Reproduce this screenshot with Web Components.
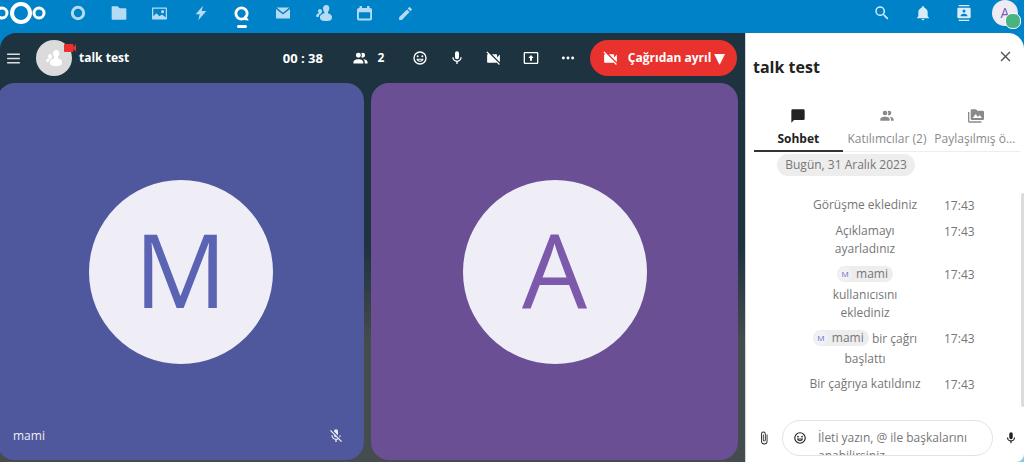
<!DOCTYPE html>
<html lang="tr">
<head>
<meta charset="utf-8">
<meta name="viewport" content="width=device-width, initial-scale=1">
<title>talk test</title>
<style>
  html, body { margin: 0; height: 100%; }
  body { font-family: "Open Sans", "Noto Sans", sans-serif; font-size: 12px; line-height: 18px; color: #222; overflow: hidden; }
</style>
</head>
<body>
<talk-app></talk-app>

<script>
const ICONS = {
  ring: '<circle cx="12" cy="12" r="8.5" fill="none" stroke="currentColor" stroke-width="4.5"/>',
  files: '<path d="M2 2h8l3 3h9a1 1 0 0 1 1 1v15a1 1 0 0 1-1 1H2a1 1 0 0 1-1-1V3a1 1 0 0 1 1-1z"/>',
  photos: '<path fill-rule="evenodd" d="M1 2.500h22q1 0 1 1v17q0 1-1 1H1q-1 0-1-1v-17q0-1 1-1zM2 4.500v12l5-5 5 5 4-3 6 5v-14zM17 6.500a2.500 2.500 0 1 1 0 5 2.500 2.500 0 0 1 0-5z"/>',
  bolt: '<path d="M15 1 4 14h6L8 23l12-14h-7z"/>',
  talk: '<circle cx="12" cy="12" r="9" fill="none" stroke="currentColor" stroke-width="4.500"/><path d="M17 15l6 6v2q-5 0-8-2z"/>',
  mail: '<path d="M0 5l12 9.500L24 5v15q0 1.500-1.500 1.500h-21Q0 21.500 0 20z"/><path d="M1 2.500h22L12 11.500z"/>',
  people: '<path d="M15.500 0c3 0 4.500 2.200 4.500 5 0 2.400-1 4-2 5.500v2c2 1 6 2 6 5.500 0 4-1.500 6-9 6s-9-2-9-6c0-3.500 4-4.500 6.500-5.500v-2C11 9 10.500 7.400 10.500 5c0-2.800 2-5 5-5z"/><path d="M6 6c2 0 3 1.500 3 3.300 0 1.500-.5 2.500-1.200 3.500-2 1-3.600 2.500-3.800 5.200H1c-1.500-1-1-4.500 3.200-5.500v-1C3.500 11 3 10.500 3 9.300 3 7.500 4 6 6 6z"/>',
  calendar: '<path fill-rule="evenodd" d="M5 0h2q1 0 1 1v2h8V1q0-1 1-1h2q1 0 1 1v2h1q3 0 3 3v14q0 3-3 3H3q-3 0-3-3V6q0-3 3-3h1V1q0-1 1-1zM3 10v9q0 1 1 1h16q1 0 1-1v-9z"/>',
  pencil: '<path d="M20.700 7a1 1 0 0 0 0-1.400L18.400 3.300a1 1 0 0 0-1.400 0l-1.900 1.800 3.800 3.800M3 17.200V21h3.800L17.800 9.900l-3.700-3.700z"/>',
  search: '<path d="M9.500 3A6.500 6.500 0 0 1 16 9.500c0 1.600-.6 3.100-1.600 4.200l.3.300h.8l5 5-1.500 1.500-5-5v-.8l-.3-.3A6.500 6.500 0 1 1 9.500 3m0 2a4.500 4.500 0 1 0 0 9 4.500 4.500 0 0 0 0-9z"/>',
  bell: '<path d="M21,19V20H3V19L5,17V11C5,7.900 7.030,5.170 10,4.290V4A2,2 0 0,1 14,4V4.290C16.970,5.170 19,7.900 19,11V17L21,19M14,21A2,2 0 0,1 10,21"/>',
  contacts: '<path d="M20,0H4V2H20V0M4,24H20V22H4V24M20,4H4A2,2 0 0,0 2,6V18A2,2 0 0,0 4,20H20A2,2 0 0,0 22,18V6A2,2 0 0,0 20,4M12,6.750A2.250,2.250 0 0,1 14.250,9A2.250,2.250 0 0,1 12,11.250A2.250,2.250 0 0,1 9.750,9A2.250,2.250 0 0,1 12,6.750M17,17H7V15.500C7,13.830 10.330,13 12,13C13.670,13 17,13.830 17,15.500V17Z"/>',
  menu: '<path d="M3 5h18v2H3zM3 11h18v2H3zM3 17h18v2H3z"/>',
  users: '<path d="M16 17V19H2V17S2 13 9 13 16 17 16 17M12.500 7.500A3.500 3.500 0 1 0 9 11A3.500 3.500 0 0 0 12.500 7.500M15.940 13A5.320 5.320 0 0 1 18 17V19H22V17S22 13.370 15.940 13M15 4A3.390 3.390 0 0 0 13.070 4.590A5 5 0 0 1 13.070 10.410A3.390 3.390 0 0 0 15 11A3.500 3.500 0 0 0 15 4Z"/>',
  smile: '<circle cx="12" cy="12" r="9" fill="none" stroke="currentColor" stroke-width="2"/><circle cx="8.500" cy="9.500" r="1.500"/><circle cx="15.500" cy="9.500" r="1.500"/><path fill-rule="evenodd" d="M6.600 13h10.800a5.500 5.500 0 0 1-10.800 0zM9 14.700q3 2.600 6 0z"/>',
  mic: '<path d="M12,2A3,3 0 0,1 15,5V11A3,3 0 0,1 9,11V5A3,3 0 0,1 12,2M19,11C19,14.530 16.390,17.440 13,17.930V21H11V17.930C7.610,17.440 5,14.530 5,11H7A5,5 0 0,0 17,11H19Z"/>',
  micOff: '<path d="M19,11C19,12.190 18.660,13.300 18.100,14.280L16.870,13.050C17.140,12.430 17.300,11.740 17.300,11H19M15,11.160L9,5.180V5A3,3 0 0,1 15,5V11.160M4.270,3L21,19.730L19.730,21L15.540,16.810C14.770,17.270 13.910,17.580 13,17.720V21H11V17.720C7.720,17.230 5,14.410 5,11H6.700C6.700,14 9.240,16.100 12,16.100C12.810,16.100 13.600,15.910 14.310,15.580L12.650,13.920L12,14A3,3 0 0,1 9,11V10.280L3,4.270L4.270,3Z"/>',
  video: '<path d="M17,10.500V7A1,1 0 0,0 16,6H4A1,1 0 0,0 3,7V17A1,1 0 0,0 4,18H16A1,1 0 0,0 17,17V13.500L21,17.500V6.500L17,10.500Z"/>',
  videoOff: '<path d="M3.270,2L2,3.270L4.730,6H4A1,1 0 0,0 3,7V17A1,1 0 0,0 4,18H16C16.200,18 16.390,17.920 16.540,17.820L19.730,21L21,19.730M21,6.500L17,10.500V7A1,1 0 0,0 16,6H9.820L21,17.180V6.500Z"/>',
  share: '<path fill-rule="evenodd" d="M3 3h18a2 2 0 0 1 2 2v14a2 2 0 0 1-2 2H3a2 2 0 0 1-2-2V5a2 2 0 0 1 2-2zM3 5v14h18V5zM12 7.500l4 4.500h-2.500v4h-3v-4H8z"/>',
  dots: '<circle cx="5" cy="12" r="2.200"/><circle cx="12" cy="12" r="2.200"/><circle cx="19" cy="12" r="2.200"/>',
  close: '<path d="M19,6.410L17.590,5L12,10.590L6.410,5L5,6.410L10.590,12L5,17.590L6.410,19L12,13.410L17.590,19L19,17.590L13.410,12L19,6.410Z"/>',
  message: '<path d="M20,2H4A2,2 0 0,0 2,4V22L6,18H20A2,2 0 0,0 22,16V4A2,2 0 0,0 20,2Z"/>',
  media: '<path fill-rule="evenodd" d="M7,15L11.500,9L15,13.500L17.500,10.500L21,15M22,4H14L12,2H6A2,2 0 0,0 4,4V16A2,2 0 0,0 6,18H22A2,2 0 0,0 24,16V6A2,2 0 0,0 22,4M2,6H0V20A2,2 0 0,0 2,22H20V20H2V6Z"/>',
  clip: '<path d="M16.500,6V17.500A4,4 0 0,1 8.500,17.500V5A2.500,2.500 0 0,1 13.500,5V15.500A1,1 0 0,1 11.500,15.500V6H10V15.500A2.500,2.500 0 0,0 15,15.500V5A4,4 0 0,0 7,5V17.500A5.500,5.500 0 0,0 18,17.500V6H16.500Z"/>'
};

const define = (name, css, html, setup) => {
  const template = document.createElement('template');
  template.innerHTML = `<style>*{box-sizing:border-box}button{font:inherit;color:inherit;background:none;border:0;padding:0;margin:0;cursor:pointer}${css}</style>${html}`;
  customElements.define(name, class extends HTMLElement {
    constructor() {
      super();
      this.attachShadow({ mode: 'open' }).append(template.content.cloneNode(true));
    }
    connectedCallback() { if (setup) setup(this, this.shadowRoot); }
  });
};

define('ui-icon', `
  :host { display: inline-flex; flex: none; }
  svg { display: block; fill: currentColor; overflow: visible; }
`, `<svg viewBox="0 0 24 24" aria-hidden="true"></svg>`, (host, root) => {
  const svg = root.querySelector('svg');
  const size = host.getAttribute('size') || 16;
  svg.setAttribute('width', size);
  svg.setAttribute('height', size);
  svg.innerHTML = ICONS[host.getAttribute('name')];
});

define('icon-button', `
  :host { display: flex; flex: none; width: 37px; height: 36px; }
  button { flex: 1; display: flex; align-items: center; justify-content: center; }
`, `<button type="button"><slot></slot></button>`, (host, root) => {
  root.querySelector('button').setAttribute('aria-label', host.getAttribute('label'));
});

define('nav-link', `
  :host { display: flex; flex: none; width: 41px; height: 26px; color: #b3dbf3; }
  :host([active]) { color: #fff; }
  a { flex: 1; position: relative; display: flex; align-items: center; justify-content: center; color: inherit; }
  :host([active]) a::after { content: ""; position: absolute; top: 25px; width: 10px; height: 3px; border-radius: 2px; background: #fff; }
`, `<a href="#"><slot></slot></a>`, (host, root) => {
  root.querySelector('a').setAttribute('aria-label', host.getAttribute('label'));
});

define('app-header', `
  :host { display: flex; height: 33px; flex: none; align-items: flex-start; justify-content: space-between; color: #d9edf9; }
  nav, .tools { display: flex; }
  .logo { width: 57px; height: 26px; flex: none; }
  .logo svg { display: block; }
  icon-button { width: 41px; height: 26px; }
  .user { position: relative; width: 26px; height: 26px; margin: 0 6px 0 8px; border-radius: 13px; background: #eeebf5; color: #7c5cb0; font-size: 14px; line-height: 26px; text-align: center; }
  .user::after { content: ""; position: absolute; right: -3px; bottom: -3px; width: 14px; height: 14px; border: 1px solid #fff; border-radius: 7px; background: #49b382; }
`, `
  <nav>
    <a class="logo" href="#" aria-label="Nextcloud"><svg width="57" height="26" fill="none" stroke="#fff"><circle cx="21" cy="13" r="9" stroke-width="4"/><circle cx="2" cy="13" r="5" stroke-width="3"/><circle cx="39" cy="13" r="5" stroke-width="3"/></svg></a>
    <nav-link label="Pano"><ui-icon name="ring" size="16"></ui-icon></nav-link>
    <nav-link label="Dosyalar"><ui-icon name="files" size="16"></ui-icon></nav-link>
    <nav-link label="Fotoğraflar"><ui-icon name="photos" size="15"></ui-icon></nav-link>
    <nav-link label="Etkinlik"><ui-icon name="bolt" size="16"></ui-icon></nav-link>
    <nav-link label="Konuş" active><ui-icon name="talk" size="15"></ui-icon></nav-link>
    <nav-link label="E-posta"><ui-icon name="mail" size="14"></ui-icon></nav-link>
    <nav-link label="Kişiler"><ui-icon name="people" size="16"></ui-icon></nav-link>
    <nav-link label="Takvim"><ui-icon name="calendar" size="15"></ui-icon></nav-link>
    <nav-link label="Notlar"><ui-icon name="pencil" size="17"></ui-icon></nav-link>
  </nav>
  <div class="tools">
    <icon-button label="Ara"><ui-icon name="search" size="18"></ui-icon></icon-button>
    <icon-button label="Bildirimler"><ui-icon name="bell" size="16"></ui-icon></icon-button>
    <icon-button label="Kişiler"><ui-icon name="contacts" size="16"></ui-icon></icon-button>
    <button class="user" type="button">A</button>
  </div>
`);

define('call-bar', `
  :host { display: flex; flex: none; align-items: center; height: 50px; padding-right: 8px; color: #fff; font-weight: 700; }
  .menu { width: 27px; opacity: .85; }
  .room { position: relative; display: flex; align-items: center; justify-content: center; flex: none; width: 36px; height: 36px; margin: 0 7px 0 9px; border-radius: 18px; background: #dbdbdb; }
  .live { position: absolute; top: 0; right: -6px; color: #e9322d; }
  h1 { flex: 1; margin: 0; font-size: 12px; line-height: 18px; }
  .time { margin-right: 12px; font-size: 13px; }
  .count { display: flex; align-items: center; justify-content: center; gap: 9px; width: 66px; height: 36px; }
  .leave { display: flex; align-items: center; justify-content: center; gap: 9px; width: 147px; height: 36px; margin-left: 4px; border-radius: 18px; background: #e9322d; white-space: nowrap; }
  .caret { font-family: "DejaVu Sans", sans-serif; font-size: 14px; line-height: 18px; }
  .leave .text { display: flex; align-items: center; gap: 3px; }
`, `
  <icon-button class="menu" label="Menü"><ui-icon name="menu" size="17"></ui-icon></icon-button>
  <div class="room"><ui-icon name="people" size="16"></ui-icon><ui-icon class="live" name="video" size="16"></ui-icon></div>
  <h1>talk test</h1>
  <span class="time">00 : 38</span>
  <button class="count" type="button"><ui-icon name="users" size="17"></ui-icon>2</button>
  <icon-button label="Tepki"><ui-icon name="smile" size="16"></ui-icon></icon-button>
  <icon-button label="Mikrofon"><ui-icon name="mic" size="16"></ui-icon></icon-button>
  <icon-button label="Kamera"><ui-icon name="videoOff" size="17"></ui-icon></icon-button>
  <icon-button label="Ekranı paylaş"><ui-icon name="share" size="16"></ui-icon></icon-button>
  <icon-button label="Diğer"><ui-icon name="dots" size="16"></ui-icon></icon-button>
  <button class="leave" type="button"><ui-icon name="videoOff" size="17"></ui-icon><span class="text">Çağrıdan ayrıl <span class="caret">▼</span></span></button>
`);

define('video-tile', `
  :host { position: relative; display: flex; align-items: center; justify-content: center; min-width: 0; border-radius: 18px; background: var(--tile); color: #fff; }
  .avatar { width: 184px; height: 184px; border-radius: 50%; background: #efeef7; color: var(--letter); font-size: 103px; line-height: 176px; text-align: center; }
  .label { position: absolute; left: 13px; right: 20px; bottom: 15px; padding-left: 3px; display: flex; align-items: center; justify-content: space-between; opacity: .9; }
`, `<div class="avatar"><slot></slot></div><div class="label"><slot name="name"></slot><slot name="status"></slot></div>`);

define('call-view', `
  :host { display: flex; flex-direction: column; min-width: 0; overflow: hidden; border-top-left-radius: 16px; background: linear-gradient(#1e3340 50%, #454c4d 72%, #454c4d 100%); }
  .grid { flex: 1; display: grid; grid-template-columns: 1fr 1fr; gap: 7px; margin: 0 7px 2px -3px; }
  .m { --tile: #4f589c; --letter: #5b64b3; }
  .a { --tile: #6b4f95; --letter: #7c59ab; }
`, `
  <call-bar></call-bar>
  <div class="grid">
    <video-tile class="m">M<span slot="name">mami</span><ui-icon slot="status" name="micOff" size="16"></ui-icon></video-tile>
    <video-tile class="a">A</video-tile>
  </div>
`);

define('side-tab', `
  :host { display: flex; min-width: 0; color: #8a8a8a; border-bottom: 1px solid #ededed; }
  :host([selected]) { color: #222; font-weight: 700; border-bottom: 2px solid #333; }
  button { flex: 1; min-width: 0; display: flex; flex-direction: column; align-items: center; gap: 6px; }
  span { max-width: 100%; white-space: nowrap; overflow: hidden; text-overflow: ellipsis; padding: 0 3px; }
`, `<button type="button" role="tab"><slot name="icon"></slot><span><slot></slot></span></button>`);

define('user-chip', `
  :host { display: inline-flex; align-items: center; gap: 4px; height: 16px; margin: 1px 0 4px; padding: 0 5px 0 1px; border-radius: 8px; background: #ededed; line-height: 16px; vertical-align: middle; }
  i { width: 14px; height: 14px; border-radius: 7px; background: #f1f1f8; color: #6a72c0; font-size: 8px; font-style: normal; line-height: 14px; text-align: center; }
`, `<i>M</i><slot></slot>`);

define('system-message', `
  :host { display: grid; grid-template-columns: 116px 1fr; column-gap: 21px; text-align: center; }
  time { text-align: left; padding-top: 1px; }
`, `<div><slot></slot></div><time></time>`, (host, root) => {
  root.querySelector('time').textContent = host.getAttribute('time');
});

define('chat-composer', `
  :host { display: flex; flex: none; align-items: center; padding: 0 0 6px 0; }
  .clip { width: 22px; }
  .box { flex: 1; min-width: 0; display: flex; align-items: center; height: 36px; margin: 0 4px 0 7px; border: 1px solid #e3e3e3; border-radius: 18px; overflow: hidden; }
  .box icon-button { width: 34px; }
  textarea { flex: 1; min-width: 0; height: 34px; padding: 8px 16px 0 1px; border: 0; outline: 0; resize: none; overflow: hidden; background: none; color: #222; font: inherit; line-height: 18px; }
  textarea::placeholder { color: #767676; opacity: 1; }
  .mic { width: 27px; }
`, `
  <icon-button class="clip" label="Dosya ekle"><ui-icon name="clip" size="14"></ui-icon></icon-button>
  <div class="box">
    <icon-button label="Emoji"><ui-icon name="smile" size="14"></ui-icon></icon-button>
    <textarea aria-label="İleti" placeholder="İleti yazın, @ ile başkalarını anabilirsiniz"></textarea>
  </div>
  <icon-button class="mic" label="Sesli ileti"><ui-icon name="mic" size="14"></ui-icon></icon-button>
`);

define('talk-sidebar', `
  :host { position: relative; display: flex; flex-direction: column; min-width: 0; border-left: 1px solid #d0d5d8; border-radius: 0 16px 8px 0; background: #fff; overflow: hidden; }
  header { display: flex; justify-content: space-between; align-items: flex-start; height: 75px; flex: none; padding: 5px 0 0 7px; }
  h2 { margin: 18px 0 0; font-size: 16px; line-height: 22px; }
  header icon-button { height: 36px; color: #555; }
  .tabs { flex: none; display: grid; grid-template-columns: repeat(3, 1fr); height: 44px; margin: 0 4px 0 8px; }
  .list { flex: 1; min-height: 0; padding-top: 2px; color: #767676; }
  .date { width: 138px; height: 22px; margin: 0 0 20px 31px; border-radius: 11px; background: #ededed; line-height: 22px; text-align: center; white-space: nowrap; }
  .messages { display: flex; flex-direction: column; gap: 7px; padding-left: 61px; }
  .thumb { position: absolute; right: 0; top: 160px; width: 3px; height: 214px; border-radius: 2px 0 0 2px; background: #dcdcdc; }
  chat-composer { padding-left: 7px; }
`, `
  <header><h2>talk test</h2><icon-button label="Kapat"><ui-icon name="close" size="17"></ui-icon></icon-button></header>
  <div class="tabs" role="tablist">
    <side-tab selected><ui-icon slot="icon" name="message" size="16"></ui-icon>Sohbet</side-tab>
    <side-tab><ui-icon slot="icon" name="users" size="16"></ui-icon>Katılımcılar (2)</side-tab>
    <side-tab><ui-icon slot="icon" name="media" size="16"></ui-icon>Paylaşılmış ögeler</side-tab>
  </div>
  <div class="list">
    <div class="date">Bugün, 31 Aralık 2023</div>
    <div class="messages">
      <system-message time="17:43">Görüşme eklediniz</system-message>
      <system-message time="17:43">Açıklamayı ayarladınız</system-message>
      <system-message time="17:43"><user-chip>mami</user-chip> kullanıcısını eklediniz</system-message>
      <system-message time="17:43"><user-chip>mami</user-chip> bir çağrı<br>başlattı</system-message>
      <system-message time="17:43">Bir çağrıya katıldınız</system-message>
    </div>
  </div>
  <div class="thumb"></div>
  <chat-composer></chat-composer>
`);

define('talk-app', `
  :host { display: flex; flex-direction: column; height: 100vh; background: linear-gradient(#0082c9 40%, #8cc6ea); }
  main { flex: 1; min-height: 0; display: grid; grid-template-columns: 1fr 279px; }
`, `<app-header></app-header><main><call-view></call-view><talk-sidebar></talk-sidebar></main>`);
</script>
</body>
</html>
